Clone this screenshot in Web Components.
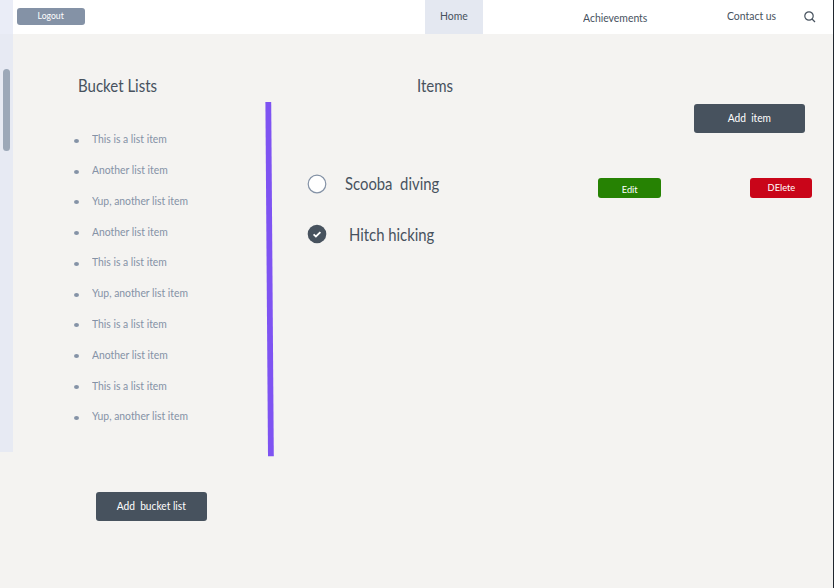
<!DOCTYPE html>
<html lang="en"><head><meta charset="utf-8"><title>Bucket Lists</title>
<style>
html,body{margin:0;height:588px;overflow:hidden;background:#f4f3f1}
body{font-family:Lato,"Open Sans",sans-serif;color:#47525e}
</style></head><body>
<bucket-app></bucket-app>
<script>
const define=(name,html)=>customElements.define(name,class extends HTMLElement{
  constructor(){super();this.attachShadow({mode:'open'}).innerHTML=html;}
});
define('nav-link',`<style>
:host{display:block;box-sizing:border-box;height:34px;font-size:11px;line-height:14px;padding-top:var(--top,9px);white-space:nowrap}
:host([active]){background:#e4e8f1}
span{display:inline-block;transform:scaleX(.947);transform-origin:0 50%}</style><span><slot></slot></span>`);
define('ui-button',`<style>
:host{display:block;box-sizing:border-box;border-radius:3px;color:#fff;white-space:pre;text-align:center;
background:var(--bg,#47525e);width:var(--w,111px);height:var(--h,29px);font-size:var(--fs,11px);line-height:14px;padding-top:var(--top,7px)}
span{display:inline-block;transform:scaleX(var(--sx,.928))}
</style><span><slot></slot></span>`);
define('page-heading',`<style>:host{display:block;font-size:16.3px;line-height:22px;padding-top:41px}
span{display:inline-block;transform:scaleX(.922);transform-origin:0 50%}</style><span><slot></slot></span>`);
define('search-icon',`<style>:host{display:block;width:12px;height:12px}svg{display:block}</style>
<svg width="12" height="12" viewBox="0 0 12 12" fill="none" stroke="#47525e" stroke-width="1.2"><circle cx="5" cy="5" r="4.2"/><path d="M8 8l3 3"/></svg>`);
define('app-header',`<style>
:host{display:grid;grid-template-columns:17px 407.5px 58px 100px 144px 77.2px 1fr;height:34px;background:#fff}
ui-button{grid-column:2;margin-top:8px}
nav-link[active]{padding-left:15px}
search-icon{margin-top:11px}
</style>
<ui-button style="--bg:#8492a6;--w:68px;--h:17px;--fs:9px;--top:1px;--sx:.96">Logout</ui-button>
<nav-link active>Home</nav-link><nav-link style="grid-column:5;--top:11px">Achievements</nav-link><nav-link>Contact us</nav-link><search-icon></search-icon>`);
define('scroll-rail',`<style>:host{display:block;position:absolute;left:0;top:0;width:13px;height:452px;background:rgba(225,230,244,.7)}
i{display:block;width:7px;height:82px;border-radius:3.5px;background:#9ca8b8}:host{box-sizing:border-box;padding:69px 0 0 3px}</style><i></i>`);
define('bucket-item',`<style>:host{display:flex;height:30.78px;font-size:11px;line-height:14px;color:#8492a6;white-space:nowrap}
i{width:5px;height:4px;border-radius:50%;background:#8492a6;margin:6.4px 13px 0 0}
span{transform:scaleX(.942);transform-origin:0 50%}</style><i></i><span><slot></slot></span>`);
define('bucket-panel',`<style>:host{display:block;width:265px}
page-heading{padding-left:77.5px}
section{padding:35.4px 0 0 74px}ui-button{margin:51.8px 0 0 96px}</style>
<page-heading>Bucket Lists</page-heading><section><slot></slot></section><ui-button>Add  bucket list</ui-button>`);
define('split-line',`<style>:host{display:block;width:10px;padding-top:68px}svg{display:block}</style>
<svg width="10" height="355"><path d="M.4 0H6.2L8.8 354.3H3Z" fill="#7e53f2"/></svg>`);
define('todo-item',`<style>:host{display:flex;height:50px;align-items:flex-start}
svg{width:20px;height:20px;flex:none}.t{font-size:16.3px;line-height:22px;white-space:pre;margin:var(--ty,-1px) 0 0 var(--gap,18px);transform:scaleX(.912);transform-origin:0 50%}
:host(:not([done])) .on,:host([done]) .off{display:none}
.a{display:flex;margin:4px 21px 0 auto;gap:89px}</style>
<svg viewBox="0 0 20 20"><circle class="off" cx="10" cy="10" r="8.8" fill="#fff" stroke="#8492a6" stroke-width="1.2"/><g class="on"><circle cx="10" cy="10" r="9.3" fill="#47525e"/><path d="M6.6 10.4l2.3 2.1 4.5-4.4" fill="none" stroke="#fff" stroke-width="1.8"/></g></svg>
<span class="t"><slot></slot></span><div class="a"><slot name="actions"></slot></div>`);
define('items-panel',`<style>:host{display:block;flex:1}
page-heading{padding-left:141.5px}
.add{display:flex;justify-content:flex-end;padding:7px 28px 0 0}section{padding:41px 0 0 32px}</style>
<page-heading>Items</page-heading><div class="add"><ui-button>Add  item</ui-button></div><section><slot></slot></section>`);
define('bucket-app',`<style>:host{display:block;position:relative;box-sizing:border-box;width:834px;height:588px;border-right:1px solid #20262e;overflow:hidden}
main{display:flex}</style>
<app-header></app-header><main><bucket-panel>
${['This is a list item','Another list item','Yup, another list item','Another list item','This is a list item','Yup, another list item','This is a list item','Another list item','This is a list item','Yup, another list item'].map(t=>`<bucket-item>${t}</bucket-item>`).join('')}
</bucket-panel><split-line></split-line><items-panel>
<todo-item>Scooba  diving<ui-button slot="actions" style="--bg:#268203;--w:63px;--h:20px;--fs:9px;--top:5px;--sx:1.03">Edit</ui-button><ui-button slot="actions" style="--bg:#c90519;--w:62px;--h:20px;--fs:9px;--top:3px;--sx:1.03">DElete</ui-button></todo-item>
<todo-item done style="--gap:22px;--ty:0px">Hitch hicking</todo-item>
</items-panel></main><scroll-rail></scroll-rail>`);
</script></body></html>
